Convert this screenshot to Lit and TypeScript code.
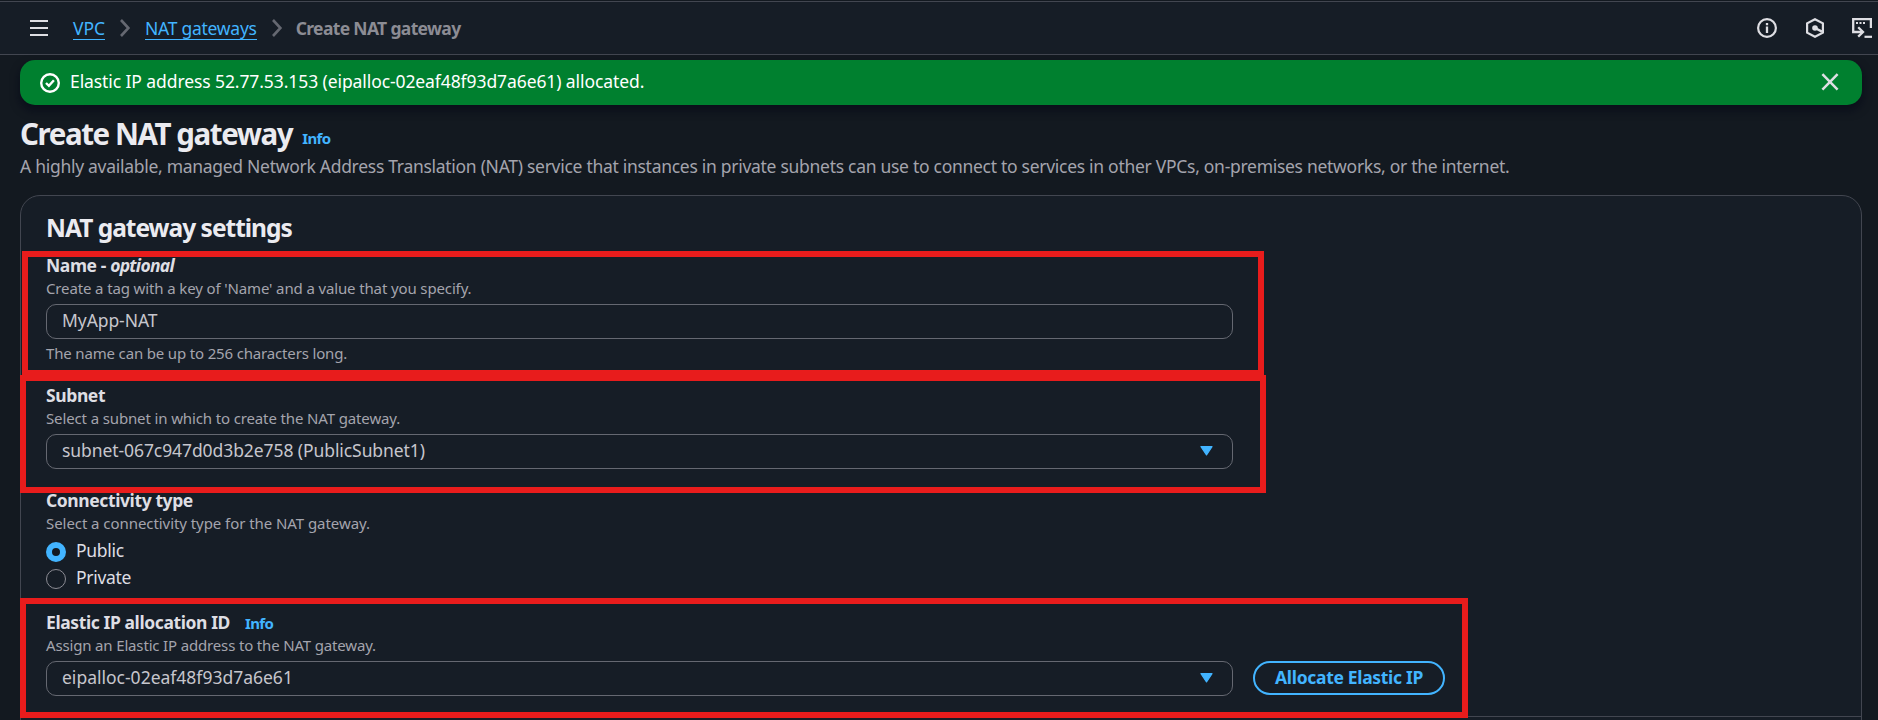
import { LitElement, html, css, svg, nothing } from "lit";
import { customElement, property, state } from "lit/decorators.js";

const icons = {
  menu: svg`<path d="M1 3h18M1 10h18M1 17h18" stroke-width="2.2"/>`,
  chevron: svg`<path d="M6 2l7.4 8L6 18" stroke-width="2.6"/>`,
  success: svg`<circle cx="10" cy="10" r="8.8" stroke-width="2.4"/><path d="M6 10l2.9 2.8 5-5.6" stroke-width="2.4"/>`,
  close: svg`<path d="M2.4 2.2l15.2 15.4M17.6 2.2L2.4 17.6" stroke-width="2.5"/>`,
  info: svg`<circle cx="10" cy="10" r="8.9" stroke-width="2.2"/><path d="M10 4.9v2.4M10 8.6v6.4" stroke-width="2.3"/>`,
  hexagon: svg`<path d="M10 1.2l7.9 4.2v9.2L10 18.8l-7.9-4.2V5.4z" stroke-width="2.2"/><circle cx="10" cy="10" r="2.8" fill="currentColor" stroke="none"/><path d="M10 10l7 3.6" stroke-width="2.4"/>`,
  shell: svg`<path d="M18.9 10V1.2H1.2V14H11" stroke-width="2.3"/><path d="M6.2 9.2l4.8 4.8-4.8 4.6" stroke-width="2.3"/><path d="M4 5h2M7.5 5h2M11 5h2" stroke-width="2"/><path d="M12.5 18.8H20" stroke-width="2.2"/>`,
  caret: svg`<path d="M1 .6h11L6.5 8.9z" fill="currentColor" stroke-width="1.2" stroke-linejoin="round"/>`,
};

@customElement("ui-icon")
class UiIcon extends LitElement {
  @property() name: keyof typeof icons = "info";
  static styles = css`
    :host { display: block; width: 20px; height: 20px; flex: none; }
    .glyph { display: block; width: 100%; height: 100%; fill: none; stroke: currentColor; }
  `;
  render() {
    return html`<svg class="glyph" viewBox=${this.name === "caret" ? "0 0 13 10" : "0 0 20 20"}>${icons[this.name]}</svg>`;
  }
}

@customElement("form-field")
class FormField extends LitElement {
  @property() label = "";
  @property() suffix = "";
  @property() info = "";
  @property() description = "";
  @property() hint = "";
  static styles = css`
    :host { display: block; }
    .label { display: flex; align-items: baseline; height: 25px; line-height: 25px; font-size: 17.5px; font-weight: 700; letter-spacing: -0.4px; color: #dedee3; white-space: pre; }
    .optional { font-style: italic; letter-spacing: -0.7px; }
    .info { margin-left: 15px; font-size: 15px; letter-spacing: -0.65px; color: #42b4ff; }
    .description { height: 20px; font-size: 15px; line-height: 20px; letter-spacing: var(--description-spacing, -0.13px); color: #a4a4ad; }
    .hint { margin-top: 4px; height: 20px; font-size: 15px; line-height: 20px; letter-spacing: -0.16px; color: #a4a4ad; }
    .control { margin-top: 6px; }
  `;
  render() {
    return html`
      <div class="label"><span>${this.label}</span>${this.suffix ? html`<span> - </span><span class="optional">${this.suffix}</span>` : nothing}${this.info ? html`<span class="info">${this.info}</span>` : nothing}</div>
      <div class="description">${this.description}</div>
      <div class="control"><slot></slot></div>
      ${this.hint ? html`<div class="hint">${this.hint}</div>` : nothing}
    `;
  }
}

@customElement("app-root")
class AppRoot extends LitElement {
  @state() connectivity = "Public";

  static styles = css`
    :host { display: block; position: relative; width: 1878px; height: 720px; overflow: hidden; background: #131920; color: #c6c6cd; font: 17.5px/25px "Noto Sans", sans-serif; white-space: nowrap; }
    .topbar { box-sizing: border-box; height: 54px; margin-top: 1px; display: flex; align-items: center; padding: 0 6px 0 29px; background: #161d26; border-top: 1px solid #424650; border-bottom: 1px solid #424650; color: #dedee3; }
    .crumbs { display: flex; align-items: center; margin-left: 24px; flex: 1; }
    .link { line-height: 25px; color: #42b4ff; border-bottom: 1px solid #42b4ff; height: 23px; letter-spacing: -0.05px; }
    .gateways { letter-spacing: -0.26px; }
    .sep { color: #656871; margin: 0 10px 0 10px; }
    .current { color: #8c8c94; font-weight: 700; letter-spacing: -0.66px; margin-left: -1px; }
    .tools { display: flex; gap: 28px; }
    .console { margin-left: -1px; }
    .flash { position: relative; display: flex; align-items: center; height: 45px; box-sizing: border-box; margin: 5px 16px 0 20px; padding: 0 22px 0 20px; border-radius: 15px; background: #00802f; color: #fff; box-shadow: 0 5px 8px 1px rgba(4, 8, 22, 0.55); letter-spacing: -0.09px; }
    .flash-text { flex: 1; margin-left: 10px; padding-bottom: 2px; }
    .dismiss { color: #dedee3; margin-bottom: 2px; }
    .heading { display: flex; align-items: baseline; margin: 10px 0 0 20px; height: 39px; line-height: 37px; }
    .title { margin: 0; font-size: 29.5px; font-weight: 700; letter-spacing: -1.42px; color: #ebebf0; }
    .title-info { position: relative; top: -1px; margin-left: 10px; font-size: 15px; font-weight: 700; letter-spacing: -0.65px; color: #42b4ff; }
    .lead { margin: 0 0 0 20px; height: 41px; line-height: 25px; letter-spacing: -0.287px; color: #a4a4ad; }
    .panel { box-sizing: border-box; height: 560px; margin: 0 16px 0 20px; padding: 17px 25px; border: 1px solid #424650; border-radius: 20px; background: #161d26; }
    .panel-title { margin: 0 0 10px; height: 30px; font-size: 24.5px; line-height: 30px; font-weight: 700; letter-spacing: -1px; color: #ebebf0; }
    .box { box-sizing: border-box; width: 1187px; height: 35px; display: flex; align-items: center; justify-content: space-between; padding: 0 19px 2px 15px; border: 1px solid #656871; border-radius: 10px; letter-spacing: -0.08px; }
    .address { letter-spacing: 0; }
    .caret { width: 13px; height: 10px; color: #42b4ff; margin-top: 1px; }
    .subnet { margin-top: 20px; }
    .connectivity { margin-top: 19px; --description-spacing: -0.06px; }
    .allocation { margin-top: 20px; --description-spacing: -0.16px; }
    .radios { display: grid; gap: 2px; margin-top: -1px; }
    .choice { display: flex; align-items: center; gap: 10px; height: 25px; color: #dedee3; letter-spacing: -0.3px; }
    .dot { box-sizing: border-box; width: 20px; height: 20px; border: 1px solid #8c8c94; border-radius: 50%; margin-top: 2px; }
    .chosen { border: 6px solid #42b4ff; background: #131920; }
    .row { display: flex; gap: 20px; }
    .button { box-sizing: border-box; width: 192px; height: 34px; padding: 0 0 1px; border: 2px solid #42b4ff; border-radius: 17px; background: none; color: #42b4ff; font: inherit; font-weight: 700; letter-spacing: -0.32px; }
    .rule { margin: 20px -25px 0; border-top: 1px solid #424650; }
    .mark { position: absolute; box-sizing: border-box; border: 6px solid #e81c1c; }
    .mark-name { left: 22px; top: 251px; width: 1242px; height: 125px; }
    .mark-subnet { left: 20px; top: 375px; width: 1246px; height: 118px; }
    .mark-ip { left: 20px; top: 598px; width: 1448px; height: 120px; }
  `;

  private radio(name: string) {
    return html`<label class="choice" @click=${() => (this.connectivity = name)}>
      <span class="dot ${this.connectivity === name ? "chosen" : ""}"></span>${name}</label>`;
  }

  render() {
    return html`
      <header class="topbar">
        <ui-icon name="menu"></ui-icon>
        <nav class="crumbs">
          <a class="link">VPC</a><ui-icon class="sep" name="chevron"></ui-icon>
          <a class="link gateways">NAT gateways</a><ui-icon class="sep" name="chevron"></ui-icon>
          <span class="current">Create NAT gateway</span>
        </nav>
        <div class="tools">
          <ui-icon name="info"></ui-icon><ui-icon name="hexagon"></ui-icon><ui-icon class="console" name="shell"></ui-icon>
        </div>
      </header>
      <div class="flash">
        <ui-icon name="success"></ui-icon>
        <span class="flash-text">Elastic IP address 52.77.53.153 (eipalloc-02eaf48f93d7a6e61) allocated.</span>
        <ui-icon class="dismiss" name="close"></ui-icon>
      </div>
      <div class="heading"><h1 class="title">Create NAT gateway</h1><span class="title-info">Info</span></div>
      <p class="lead">A highly available, managed Network Address Translation (NAT) service that instances in private subnets can use to connect to services in other VPCs, on-premises networks, or the internet.</p>
      <section class="panel">
        <h2 class="panel-title">NAT gateway settings</h2>
        <form-field label="Name" suffix="optional" description="Create a tag with a key of 'Name' and a value that you specify." hint="The name can be up to 256 characters long.">
          <div class="box">MyApp-NAT</div>
        </form-field>
        <form-field class="subnet" label="Subnet" description="Select a subnet in which to create the NAT gateway.">
          <div class="box">subnet-067c947d0d3b2e758 (PublicSubnet1)<ui-icon class="caret" name="caret"></ui-icon></div>
        </form-field>
        <form-field class="connectivity" label="Connectivity type" description="Select a connectivity type for the NAT gateway.">
          <div class="radios">${this.radio("Public")}${this.radio("Private")}</div>
        </form-field>
        <form-field class="allocation" label="Elastic IP allocation ID" info="Info" description="Assign an Elastic IP address to the NAT gateway.">
          <div class="row">
            <div class="box address">eipalloc-02eaf48f93d7a6e61<ui-icon class="caret" name="caret"></ui-icon></div>
            <button class="button">Allocate Elastic IP</button>
          </div>
        </form-field>
        <div class="rule"></div>
      </section>
      <div class="mark mark-name"></div>
      <div class="mark mark-subnet"></div>
      <div class="mark mark-ip"></div>
    `;
  }
}
